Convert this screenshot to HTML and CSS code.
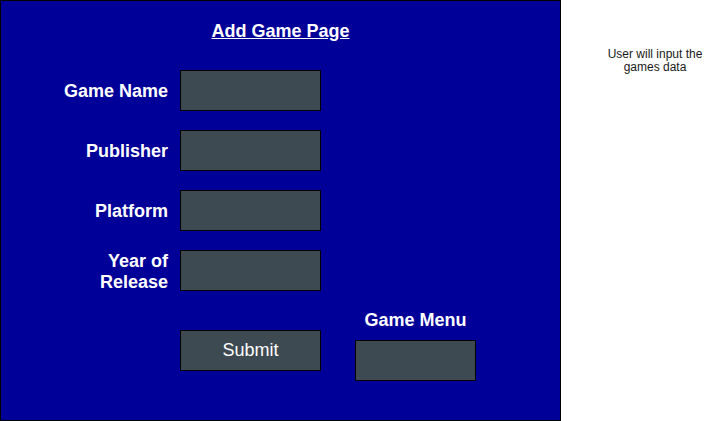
FILE: index.html
```html
<!DOCTYPE html>
<html>
<head>
<meta charset="utf-8">
<link rel="stylesheet" href="styles.css">
</head>
<body>
<div class="page">
  <div class="panel">
    <h1 class="title">Add Game Page</h1>
    <div class="form">
      <label class="label">Game Name</label><div class="field"></div>
      <label class="label">Publisher</label><div class="field"></div>
      <label class="label">Platform</label><div class="field"></div>
      <label class="label">Year of<br>Release</label><div class="field"></div>
    </div>
    <div class="actions">
      <div class="submit">Submit</div>
      <div class="menu">
        <div class="menu-label">Game Menu</div>
        <div class="menu-box"></div>
      </div>
    </div>
  </div>
  <div class="note">User will input the<br>games data</div>
</div>
</body>
</html>
```
FILE: styles.css
```css
html, body {
  margin: 0;
  padding: 0;
  background: #ffffff;
}
body {
  font-family: "Liberation Sans", Arial, sans-serif;
}
.page {
  display: flex;
  align-items: flex-start;
  width: 711px;
  height: 421px;
}
.panel {
  box-sizing: border-box;
  width: 561px;
  height: 421px;
  background: #000099;
  border: 1px solid #000000;
  padding-top: 20px;
  color: #ffffff;
}
.title {
  margin: 0;
  font-size: 18px;
  font-weight: bold;
  line-height: 21px;
  text-align: center;
  text-decoration: underline;
}
.form {
  display: grid;
  grid-template-columns: 167px 141px;
  grid-auto-rows: 41px;
  column-gap: 12px;
  row-gap: 19px;
  margin-top: 28px;
  align-items: center;
}
.label {
  padding-top: 2px;
  font-size: 18px;
  font-weight: bold;
  line-height: 1.15;
  text-align: right;
}
.field {
  box-sizing: border-box;
  height: 41px;
  background: #3e4a51;
  border: 1px solid #000000;
}
.actions {
  display: flex;
  align-items: flex-start;
  margin-top: 19px;
  padding-left: 179px;
}
.submit {
  box-sizing: border-box;
  width: 141px;
  height: 41px;
  margin-top: 20px;
  background: #3e4a51;
  border: 1px solid #000000;
  display: flex;
  align-items: center;
  justify-content: center;
  font-size: 18px;
}
.menu {
  margin-left: 34px;
  width: 121px;
  display: flex;
  flex-direction: column;
  align-items: center;
}
.menu-label {
  font-size: 18px;
  font-weight: bold;
  line-height: 21px;
  white-space: nowrap;
}
.menu-box {
  box-sizing: border-box;
  width: 121px;
  height: 41px;
  margin-top: 9px;
  background: #3e4a51;
  border: 1px solid #000000;
}
.note {
  width: 110px;
  margin-left: 39px;
  margin-top: 48px;
  font-size: 12px;
  line-height: 13px;
  text-align: center;
  color: #1a1a1a;
}
```
